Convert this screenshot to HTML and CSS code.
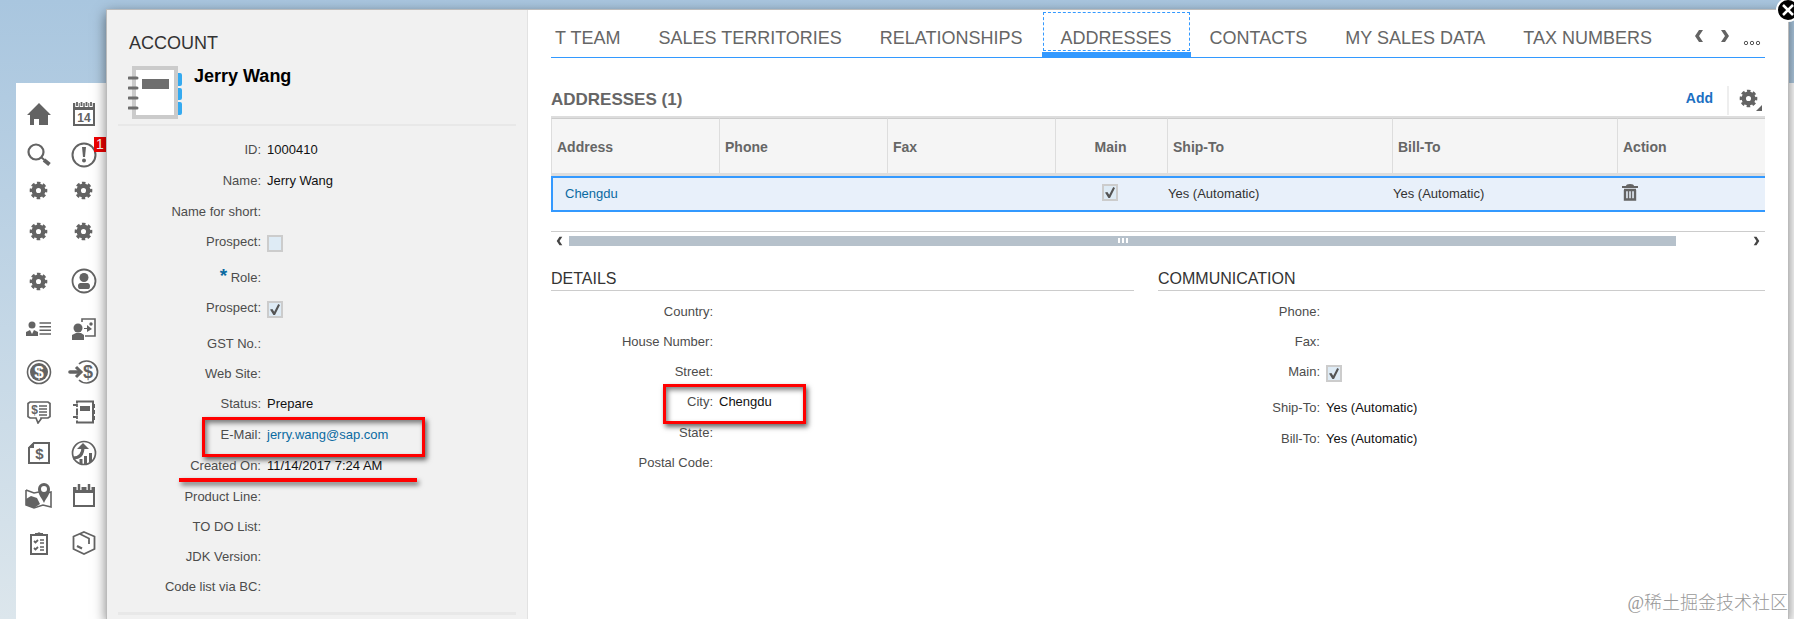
FILE: index.html
```html
<!DOCTYPE html>
<html lang="en">
<head>
  <meta charset="UTF-8" />
  <title>Account - Jerry Wang</title>
  <link rel="stylesheet" href="styles.css">
</head>
<body>
  <svg class="defs" aria-hidden="true">
    <symbol id="gear" viewBox="0 0 20 20">
      <circle cx="10" cy="10" r="5" fill="none" stroke="currentColor" stroke-width="4.6" />
      <circle cx="10" cy="10" r="8" fill="none" stroke="currentColor" stroke-width="2.6" stroke-dasharray="3.7 2.583" stroke-dashoffset="1.85" />
    </symbol>
    <symbol id="chevron-left" viewBox="0 0 10 12">
      <path d="M5 0h4L5 6l4 6H5L1 6z" fill="currentColor" />
    </symbol>
    <symbol id="chevron-right" viewBox="0 0 10 12">
      <path d="M5 0H1l4 6-4 6h4l4-6z" fill="currentColor" />
    </symbol>
  </svg>

  <nav class="workspace">
    <div class="icons">
      <button aria-label="Home"><svg width="24" height="24" viewBox="0 0 24 24"><path d="M12 1 0 13h3v10h4v-6h5v6h9V13h3l-3-3z" fill="currentColor"/></svg></button>
      <button aria-label="Calendar"><svg width="22" height="24" viewBox="0 0 22 24"><path d="M1 2h20v21H1z" fill="none" stroke="currentColor" stroke-width="2"/><path d="M1 3h20v5H1z" fill="currentColor"/><path d="M4 0v5M8.500 0v5M13.500 0v5M18 0v5" stroke="#fff" stroke-width="3.500"/><path d="M4 0v4M8.500 0v4M13.500 0v4M18 0v4" stroke="currentColor" stroke-width="1.800"/><text x="11" y="20" class="glyph" font-size="12" text-anchor="middle">14</text></svg></button>

      <button aria-label="Search"><svg width="24" height="24" viewBox="0 0 24 24"><circle cx="9" cy="9" r="7.500" fill="none" stroke="currentColor" stroke-width="2.200"/><path d="m14.500 14.500 3 2.500" stroke="currentColor" stroke-width="2"/><path d="m17 17 5.500 4.500" stroke="currentColor" stroke-width="4"/></svg></button>
      <button class="alert" aria-label="Alerts"><svg width="26" height="26" viewBox="0 0 26 26"><circle cx="13" cy="13" r="11.500" fill="none" stroke="currentColor" stroke-width="2"/><path d="M11 5h4l-1 10h-2z" fill="currentColor"/><circle cx="13" cy="18.500" r="2" fill="currentColor"/></svg><span class="badge">1</span></button>

      <button aria-label="Settings"><svg width="19" height="19"><use href="#gear"/></svg></button>
      <button aria-label="Settings"><svg width="19" height="19"><use href="#gear"/></svg></button>
      <button aria-label="Settings"><svg width="19" height="19"><use href="#gear"/></svg></button>
      <button aria-label="Settings"><svg width="19" height="19"><use href="#gear"/></svg></button>
      <button aria-label="Settings"><svg width="19" height="19"><use href="#gear"/></svg></button>
      <button aria-label="Profile"><svg width="26" height="26" viewBox="0 0 26 26"><circle cx="13" cy="13" r="11.500" fill="none" stroke="currentColor" stroke-width="1.800"/><circle cx="13" cy="9.500" r="4.500" fill="currentColor"/><path d="M7 18c0-4 4-3 6-3s6-1 6 3-2 3-6 3-6 1-6-3z" fill="currentColor"/></svg></button>

      <button aria-label="Contacts"><svg width="26" height="18" viewBox="0 0 26 18"><circle cx="6" cy="5" r="3.500" fill="currentColor"/><path d="M0 16v-4l4-2 2 4 2-4 4 2v4z" fill="currentColor"/><path d="M13.500 3H25M13.500 6.700H25M13.500 10.300H25M13.500 14H25" stroke="currentColor" stroke-width="1.600"/></svg></button>
      <button aria-label="Visits"><svg width="24" height="24" viewBox="0 0 24 24"><path d="M10 5V2h13v17H13" fill="none" stroke="currentColor" stroke-width="1.600"/><circle cx="6" cy="11" r="4.500" fill="currentColor"/><path d="M0 23v-5l4-2h5l3 2v5z" fill="currentColor"/><path d="M12 11h3V8l5 4-5 3v-3h-3z" fill="currentColor"/><circle cx="19" cy="7" r="1.700" fill="currentColor"/></svg></button>

      <button aria-label="Sales"><svg width="26" height="26" viewBox="0 0 26 26"><circle cx="13" cy="13" r="11.500" fill="none" stroke="currentColor" stroke-width="1.600"/><circle cx="13" cy="13" r="9" fill="currentColor"/><text x="13" y="19" class="glyph light" font-size="17" text-anchor="middle">$</text></svg></button>
      <button aria-label="Quotes"><svg width="32" height="26" viewBox="0 0 32 26"><path d="M11 5a11 11 0 1 1 0 16" fill="none" stroke="currentColor" stroke-width="1.700"/><path d="M2 13h8" stroke="currentColor" stroke-width="3.600" stroke-linecap="round"/><path d="m8 8 5 5-5 5" fill="none" stroke="currentColor" stroke-width="3"/><text x="20" y="19" class="glyph" font-size="18" text-anchor="middle">$</text></svg></button>

      <button aria-label="Offers"><svg width="24" height="24" viewBox="0 0 24 24"><path d="M3 2h18l2 1.500v13L21 18h-7v1l-3 4-2-5H3l-2-1.500v-13z" fill="none" stroke="currentColor" stroke-width="1.700"/><text x="7.500" y="14" class="glyph" font-size="12" text-anchor="middle">$</text><path d="M12 6h8M12 9h8M12 12h8M12 15h8" stroke="currentColor" stroke-width="1.500"/></svg></button>
      <button aria-label="Accounts"><svg width="24" height="24" viewBox="0 0 24 24"><path d="M5 1.500h16v21H5z" fill="none" stroke="currentColor" stroke-width="2"/><path d="M21.500 4v4M21.500 10v4M21.500 16v4" stroke="currentColor" stroke-width="3"/><path d="M2 6h5M2 18h5" stroke="#fff" stroke-width="5"/><path d="M8 6h10v5H8z" fill="currentColor"/><path d="M1 5h4v2M1 17h4v2" fill="none" stroke="currentColor" stroke-width="1.800"/></svg></button>

      <button aria-label="Invoices"><svg width="24" height="24" viewBox="0 0 24 24"><path d="M7 2h15v20H2V7z" fill="none" stroke="currentColor" stroke-width="2"/><path d="M1 7 7 1v6z" fill="currentColor"/><text x="12.500" y="18" class="glyph" font-size="15" text-anchor="middle">$</text></svg></button>
      <button aria-label="Analysis"><svg width="26" height="26" viewBox="0 0 26 26"><circle cx="13" cy="13" r="11.500" fill="none" stroke="currentColor" stroke-width="1.700"/><path d="M2 18c6 0 10-3 10-11" fill="none" stroke="currentColor" stroke-width="3"/><path d="m6 9 6-6 6 6z" fill="currentColor"/><path d="M10 24v-5M14.500 24v-8M19.500 22v-9" stroke="currentColor" stroke-width="3"/></svg></button>

      <button aria-label="Map"><svg width="27" height="28" viewBox="0 0 27 28"><path d="m1 8 8 3 5-1M22 11l4-1v15l-8-2-9 3-8-3V8" fill="none" stroke="currentColor" stroke-width="1.600"/><path d="m1 17 5-3 6 2 3 6-6 4-8-3z" fill="currentColor"/><path fill-rule="evenodd" d="M19 21c-2-5-6-8-6-14a6 6 0 0 1 12 0c0 6-4 9-6 14zm0-17a3 3 0 1 0 0 6 3 3 0 0 0 0-6z" fill="currentColor"/></svg></button>
      <button aria-label="Planner"><svg width="22" height="24" viewBox="0 0 22 24"><path d="M1 4h20v18H1z" fill="none" stroke="currentColor" stroke-width="2"/><path d="M1 4h20v5H1z" fill="currentColor"/><path d="M6 0v6M16 0v6" stroke="#fff" stroke-width="5"/><path d="M6 0v6M16 0v6" stroke="currentColor" stroke-width="2.500"/></svg></button>

      <button aria-label="Tasks"><svg width="20" height="24" viewBox="0 0 20 24"><path d="M2 4h16v19H2z" fill="none" stroke="currentColor" stroke-width="2"/><path d="M6 5V2h2.500a2 2 0 0 1 3 0H14v3z" fill="currentColor"/><path d="m5 10 1.500 1.500L9 9M5 17l1.500 1.500L9 16" fill="none" stroke="currentColor" stroke-width="1.800"/><path d="M11 9h4M11 12h4M11 16h4M11 19h4" stroke="currentColor" stroke-width="1.300"/></svg></button>
      <button aria-label="Products"><svg width="24" height="26" viewBox="0 0 24 26"><path d="m12 2 10.500 4.500V19L12 24 1.500 19V6.500z" fill="none" stroke="currentColor" stroke-width="1.800"/><path d="m8 4 9 4.500V14" fill="none" stroke="currentColor" stroke-width="1.800"/><path d="m5 16 5 2.500" stroke="currentColor" stroke-width="2.200"/></svg></button>
    </div>
  </nav>

  <main class="modal">
    <button class="close" aria-label="Close"><svg width="12" height="12" viewBox="0 0 12 12"><path d="m1 1 10 10M11 1 1 11" stroke="#fff" stroke-width="2.500"/></svg></button>

    <aside class="account">
      <h1>ACCOUNT</h1>
      <div class="account-head">
        <svg width="54" height="54" viewBox="0 0 54 54">
          <path d="M48 7h4q2 0 2 2v9q0 2-2 2h-4zM48 22h4q2 0 2 2v8q0 2-2 2h-4zM48 36h4q2 0 2 2v9q0 2-2 2h-4z" fill="#35aaf0"/>
          <path d="M6 2h42v49H6z" fill="#fff" stroke="#cbcbcb" stroke-width="4"/>
          <path d="M14 13h27v10H14z" fill="#6e6e6e"/>
          <path d="M1 12h8M1 22h8M1 32h8M1 42h8" stroke="#6e6e6e" stroke-width="3" stroke-linecap="round"/>
        </svg>
        <h2>Jerry Wang</h2>
      </div>
      <div class="fields">
        <div class="row filled"><span class="label">ID:</span><span>1000410</span></div>
        <div class="row filled"><span class="label">Name:</span><span>Jerry Wang</span></div>
        <div class="row"><span class="label">Name for short:</span></div>
        <div class="row tick"><label class="label" for="prospect1">Prospect:</label><input type="checkbox" id="prospect1"></div>
        <div class="row"><span class="label"><b class="required">*</b> Role:</span></div>
        <div class="row tick"><label class="label" for="prospect2">Prospect:</label><input type="checkbox" id="prospect2" checked></div>
        <div class="row"><span class="label">GST No.:</span></div>
        <div class="row"><span class="label">Web Site:</span></div>
        <div class="row filled"><span class="label">Status:</span><span>Prepare</span></div>
        <div class="row filled"><span class="label">E-Mail:</span><a href="mailto:jerry.wang@sap.com">jerry.wang@sap.com</a><i class="mark mark-email"></i></div>
        <div class="row filled"><span class="label">Created On:</span><span>11/14/2017 7:24 AM</span><i class="mark-line"></i></div>
        <div class="row"><span class="label">Product Line:</span></div>
        <div class="row"><span class="label">TO DO List:</span></div>
        <div class="row"><span class="label">JDK Version:</span></div>
        <div class="row"><span class="label">Code list via BC:</span></div>
      </div>
    </aside>

    <section class="content">
      <div class="tabbar">
        <ul class="tabs">
          <li><button>T TEAM</button></li>
          <li><button>SALES TERRITORIES</button></li>
          <li><button>RELATIONSHIPS</button></li>
          <li class="active"><button>ADDRESSES</button></li>
          <li><button>CONTACTS</button></li>
          <li><button>MY SALES DATA</button></li>
          <li><button>TAX NUMBERS</button></li>
        </ul>
        <div class="tab-nav">
          <button aria-label="Previous"><svg width="10" height="12"><use href="#chevron-left"/></svg></button>
          <button aria-label="Next"><svg width="10" height="12"><use href="#chevron-right"/></svg></button>
          <button class="more" aria-label="More"><svg width="18" height="6" viewBox="0 0 18 6"><g fill="none" stroke="#555" stroke-width="1"><circle cx="3" cy="3" r="1.700"/><circle cx="9" cy="3" r="1.700"/><circle cx="15" cy="3" r="1.700"/></g></svg></button>
        </div>
      </div>

      <div class="toolbar">
        <h2>ADDRESSES (1)</h2>
        <button class="add">Add</button>
        <button class="settings" aria-label="Settings"><svg width="24" height="24" viewBox="0 0 24 24"><use href="#gear" x="0" y="1" width="19" height="19"/><path d="M23 17v6h-6z" fill="currentColor"/></svg></button>
      </div>

      <table>
        <colgroup><col class="wide"><col class="wide"><col class="wide"><col class="narrow"><col class="auto"><col class="auto"><col></colgroup>
        <thead>
          <tr><th>Address</th><th>Phone</th><th>Fax</th><th class="center">Main</th><th>Ship-To</th><th>Bill-To</th><th>Action</th></tr>
        </thead>
        <tbody>
          <tr>
            <td class="first"><a href="#">Chengdu</a></td><td></td><td></td>
            <td class="center"><input type="checkbox" aria-label="Main" checked></td>
            <td>Yes (Automatic)</td><td>Yes (Automatic)</td>
            <td class="action"><button aria-label="Delete"><svg width="16" height="17" viewBox="0 0 16 17"><path d="M4 2q0-2 4-2t4 2h4v2H0V2z" fill="currentColor"/><path d="M3 6v9.500h10V6M2 6h12" fill="none" stroke="currentColor" stroke-width="2.400"/><path d="M6.500 6v9M9.500 6v9" stroke="currentColor" stroke-width="1.500"/></svg></button></td>
          </tr>
        </tbody>
      </table>

      <div class="scroller">
        <svg width="7" height="10"><use href="#chevron-left"/></svg>
        <div class="track"><div class="thumb"><i></i><i></i><i></i></div></div>
        <svg width="7" height="10"><use href="#chevron-right"/></svg>
      </div>

      <div class="sections">
        <section>
          <h3>DETAILS</h3>
          <div class="row"><span class="label">Country:</span></div>
          <div class="row"><span class="label">House Number:</span></div>
          <div class="row"><span class="label">Street:</span></div>
          <div class="row filled"><span class="label">City:</span><span>Chengdu</span><i class="mark mark-city"></i></div>
          <div class="row"><span class="label">State:</span></div>
          <div class="row"><span class="label">Postal Code:</span></div>
        </section>
        <section>
          <h3>COMMUNICATION</h3>
          <div class="row"><span class="label">Phone:</span></div>
          <div class="row"><span class="label">Fax:</span></div>
          <div class="row tick"><label class="label" for="main">Main:</label><input type="checkbox" id="main" checked></div>
          <div class="row filled"><span class="label">Ship-To:</span><span>Yes (Automatic)</span></div>
          <div class="row filled"><span class="label">Bill-To:</span><span>Yes (Automatic)</span></div>
        </section>
      </div>
    </section>
  </main>

  <div class="watermark">@稀土掘金技术社区</div>
</body>
</html>
```

FILE: styles.css
```css
* {
  box-sizing: border-box;
}
body {
  margin: 0;
  height: 100vh;
  overflow: hidden;
  position: relative;
  display: flex;
  font-family: "Liberation Sans", Arial, sans-serif;
  font-size: 13px;
  line-height: 20px;
  color: #111;
  background: linear-gradient(#a9c6df, #dce6ec);
}
h1, h2, h3, ul {
  margin: 0;
  padding: 0;
}
button {
  font: inherit;
  color: #636363;
  background: none;
  border: 0;
  padding: 0;
  cursor: pointer;
}
svg {
  display: block;
}
a {
  color: #0a6aa1;
  text-decoration: none;
}
.defs {
  position: absolute;
  width: 0;
  height: 0;
}
.glyph {
  font-weight: bold;
  fill: currentColor;
}
.glyph.light {
  fill: #fff;
}

/* icon strip behind the window */
.workspace {
  flex: 1;
  margin: 83px 0 0 16px;
  padding-top: 11px;
  background: #fff;
}
.icons {
  display: grid;
  grid-template-columns: 45px 45px;
  grid-template-rows: 40px 42px 28px 54px 46px 50px 36px 44px 38px 48px 46px;
}
.icons button {
  display: flex;
  align-items: center;
  justify-content: center;
}
.alert {
  position: relative;
}
.badge {
  position: absolute;
  top: 3px;
  right: 0;
  width: 12px;
  height: 15px;
  background: #f00000;
  color: #fff;
  font-size: 14px;
  line-height: 15px;
}

/* window */
.modal {
  position: absolute;
  top: 9px;
  left: 106px;
  right: 5px;
  bottom: 0;
  display: flex;
  background: #fff;
  border: 1px solid #bbb;
  border-bottom: 0;
  box-shadow: 0 4px 12px rgba(0, 0, 0, 0.5);
}
.close {
  position: absolute;
  top: -12px;
  right: -12px;
  width: 24px;
  height: 24px;
  display: flex;
  align-items: center;
  justify-content: center;
  border: 2px solid #fff;
  border-radius: 50%;
  background: #000;
}

.account {
  width: 421px;
  flex-shrink: 0;
  padding: 23px 11px 0;
  background: #f1f1f1;
  border-right: 1px solid #e2e2e2;
}
.account h1 {
  padding-left: 11px;
  font-size: 18px;
  font-weight: normal;
  color: #333;
}
.account-head {
  display: flex;
  gap: 12px;
  margin-top: 13px;
  padding: 0 10px 4px;
  border-bottom: 2px solid #e8e8e8;
}
.account-head h2 {
  font-size: 18px;
  color: #000;
}
.fields {
  padding: 14px 0 5px;
  border-bottom: 3px solid #e8e8e8;
}
.row {
  position: relative;
  display: grid;
  grid-template-columns: 162px 1fr;
  column-gap: 6px;
  height: 30px;
}
.fields .row {
  grid-template-columns: 143px 1fr;
}
.row.filled {
  height: 31px;
}
.row.tick {
  height: 36px;
}
.label {
  text-align: right;
  color: #4c4c4c;
}
.required {
  font-size: 19px;
  line-height: 1px;
  color: #0a6aa1;
}
input[type="checkbox"] {
  appearance: none;
  position: relative;
  width: 16px;
  height: 17px;
  margin: 3px 0 0;
  border: 2px solid #ccc;
  background: #deebf5;
}
input[type="checkbox"]:checked::after {
  content: "";
  position: absolute;
  inset: 1px;
  background: #555;
  clip-path: polygon(0 50%, 24% 45%, 42% 70%, 82% 0, 100% 8%, 50% 100%, 34% 100%);
}

/* highlights */
.mark {
  position: absolute;
  top: -8px;
  height: 40px;
  border: 3px solid #f00;
  box-shadow: 2px 3px 5px rgba(0, 0, 0, 0.6), inset 2px 3px 5px rgba(0, 0, 0, 0.5);
  pointer-events: none;
}
.mark-email {
  left: 84px;
  width: 223px;
}
.mark-city {
  left: 112px;
  width: 143px;
}
.mark-line {
  position: absolute;
  top: 22px;
  left: 61px;
  width: 238px;
  height: 4px;
  background: #f00;
  box-shadow: 2px 3px 5px rgba(0, 0, 0, 0.6);
}

.content {
  flex: 1;
  min-width: 0;
  padding: 2px 23px 0 23px;
}
.tabbar {
  display: flex;
  border-bottom: 1px solid #39f;
}
.tabs {
  flex: 1;
  min-width: 0;
  display: flex;
  justify-content: flex-end;
  overflow: hidden;
  list-style: none;
}
.tabs li {
  flex-shrink: 0;
  padding: 0 1px 1px;
  border-bottom: 5px solid transparent;
}
.tabs button {
  height: 39px;
  padding: 12px 17px 0;
  border: 1px dashed transparent;
  font-size: 18px;
  color: #666;
}
.tabs li.active {
  border-bottom-color: #39f;
}
.tabs .active button {
  border-color: #39f;
}
.tab-nav {
  display: flex;
  align-items: flex-start;
  gap: 16px;
  padding: 18px 4px 0 23px;
}
.tab-nav .more {
  margin: 10px 0 0 -3px;
}

.toolbar {
  display: flex;
  align-items: center;
  margin-top: 26px;
  height: 32px;
}
.toolbar h2 {
  flex: 1;
  font-size: 17px;
  color: #666;
}
.add {
  padding-bottom: 5px;
  margin-right: 14px;
  font-size: 14px;
  font-weight: bold;
  color: #1b6fc2;
}
.settings {
  height: 29px;
  padding: 0 2px 0 10px;
  border-left: 2px solid #eee;
}

table {
  width: 100%;
  table-layout: fixed;
  border-spacing: 0;
  border-top: 2px solid #ddd;
}
.wide {
  width: 168px;
}
.narrow {
  width: 112px;
}
.auto {
  width: 225px;
}
th {
  height: 58px;
  padding: 1px 0 0 5px;
  text-align: left;
  font-size: 14px;
  color: #666;
  background: #f5f5f5;
  border-top: 1px solid #ccc;
  border-left: 1px solid #ddd;
  border-bottom: 3px solid #ddd;
}
th.center {
  padding-right: 7px;
}
.center {
  text-align: center;
}
td {
  height: 36px;
  padding: 0 0 1px 1px;
  color: #333;
  background: #e8f0fa;
  border-top: 2px solid #39f;
  border-bottom: 2px solid #39f;
}
td.first {
  padding-left: 12px;
  border-left: 2px solid #39f;
}
td.center {
  padding: 0 2px 4px 0;
}
td.action {
  padding: 2px 0 0 5px;
}
td.action svg {
  margin-top: 1px;
}
td input[type="checkbox"] {
  margin: 0;
  vertical-align: middle;
}

.scroller {
  display: flex;
  align-items: center;
  gap: 6px;
  height: 18px;
  margin-top: 19px;
  padding: 0 5px;
  border-top: 1px solid #ccc;
  color: #444;
}
.track {
  flex: 1;
}
.thumb {
  display: flex;
  align-items: center;
  justify-content: center;
  gap: 2px;
  width: 94%;
  height: 10px;
  background: #b6c1cb;
}
.thumb i {
  width: 2px;
  height: 5px;
  background: #fff;
}

.sections {
  display: grid;
  grid-template-columns: 583fr 607fr;
  gap: 24px;
  margin-top: 20px;
}
.sections h3 {
  margin-bottom: 11px;
  padding-bottom: 1px;
  font-size: 16px;
  font-weight: normal;
  color: #333;
  border-bottom: 1px solid #ccc;
}

.watermark {
  position: absolute;
  right: 6px;
  bottom: 4px;
  font-family: "Liberation Serif", "Noto Sans CJK SC", serif;
  font-size: 18px;
  font-weight: 300;
  line-height: 24px;
  color: #999;
}
```
